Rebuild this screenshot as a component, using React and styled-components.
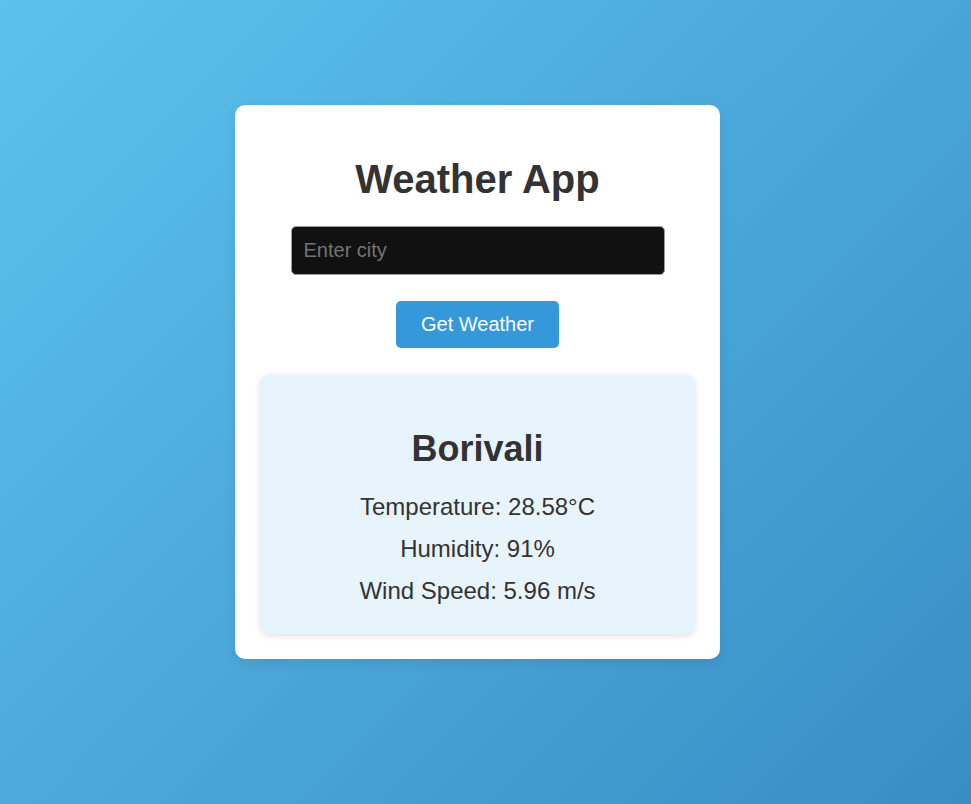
import React from "react";
import styled, { createGlobalStyle } from "styled-components";

const GlobalStyle = createGlobalStyle`
  html, body {
    margin: 0;
    padding: 0;
  }
  body {
    font-family: "Liberation Sans", Arial, sans-serif;
    background: linear-gradient(135deg, #5cc2ed 0%, #398dc5 100%);
    min-height: 100vh;
  }
`;

const Page = styled.div`
  min-height: 804px;
  display: flex;
  justify-content: center;
  align-items: flex-start;
  padding: 105px 16px 0 0;
  box-sizing: border-box;
`;

const Card = styled.div`
  width: 485px;
  box-sizing: border-box;
  padding: 25px;
  background: #ffffff;
  border-radius: 10px;
  box-shadow: 0 4px 12px rgba(0, 0, 0, 0.08);
  text-align: center;
  color: #333333;
`;

const Title = styled.h1`
  margin: 26px 0 24px;
  font-size: 40px;
  line-height: 46px;
  font-weight: 700;
  color: #333333;
`;

const CityInput = styled.input`
  display: block;
  width: 80%;
  margin: 0 auto 26px;
  padding: 12px;
  font-family: inherit;
  font-size: 20px;
  line-height: 23px;
  height: 23px;
  color: #ffffff;
  caret-color: #ffffff;
  background: #111111;
  border: 1px solid #9a9a9a;
  border-radius: 5px;
  outline: none;

  &::placeholder {
    color: #757575;
  }
`;

const Button = styled.button`
  display: inline-block;
  margin: 0 0 26px;
  padding: 12px 25px;
  font-family: inherit;
  font-size: 20px;
  line-height: 23px;
  color: #ffffff;
  background: #3498db;
  border: none;
  border-radius: 5px;
  cursor: pointer;
`;

const Result = styled.div`
  padding: 25px;
  background: #e8f4fb;
  border-radius: 10px;
  box-shadow: 0 2px 6px rgba(0, 0, 0, 0.12);
`;

const City = styled.h2`
  margin: 29px 0 24px;
  font-size: 36px;
  line-height: 41px;
  font-weight: 700;
  color: #333333;
`;

const Stat = styled.p`
  margin: 0 0 14px;
  font-size: 24px;
  line-height: 28px;
  color: #333333;

  &:last-child {
    margin-bottom: 4px;
  }
`;

export default function App() {
  return (
    <>
      <GlobalStyle />
      <Page>
        <Card>
          <Title>Weather App</Title>
          <CityInput type="text" placeholder="Enter city" autoFocus />
          <Button>Get Weather</Button>
          <Result>
            <City>Borivali</City>
            <Stat>Temperature: 28.58°C</Stat>
            <Stat>Humidity: 91%</Stat>
            <Stat>Wind Speed: 5.96 m/s</Stat>
          </Result>
        </Card>
      </Page>
    </>
  );
}
